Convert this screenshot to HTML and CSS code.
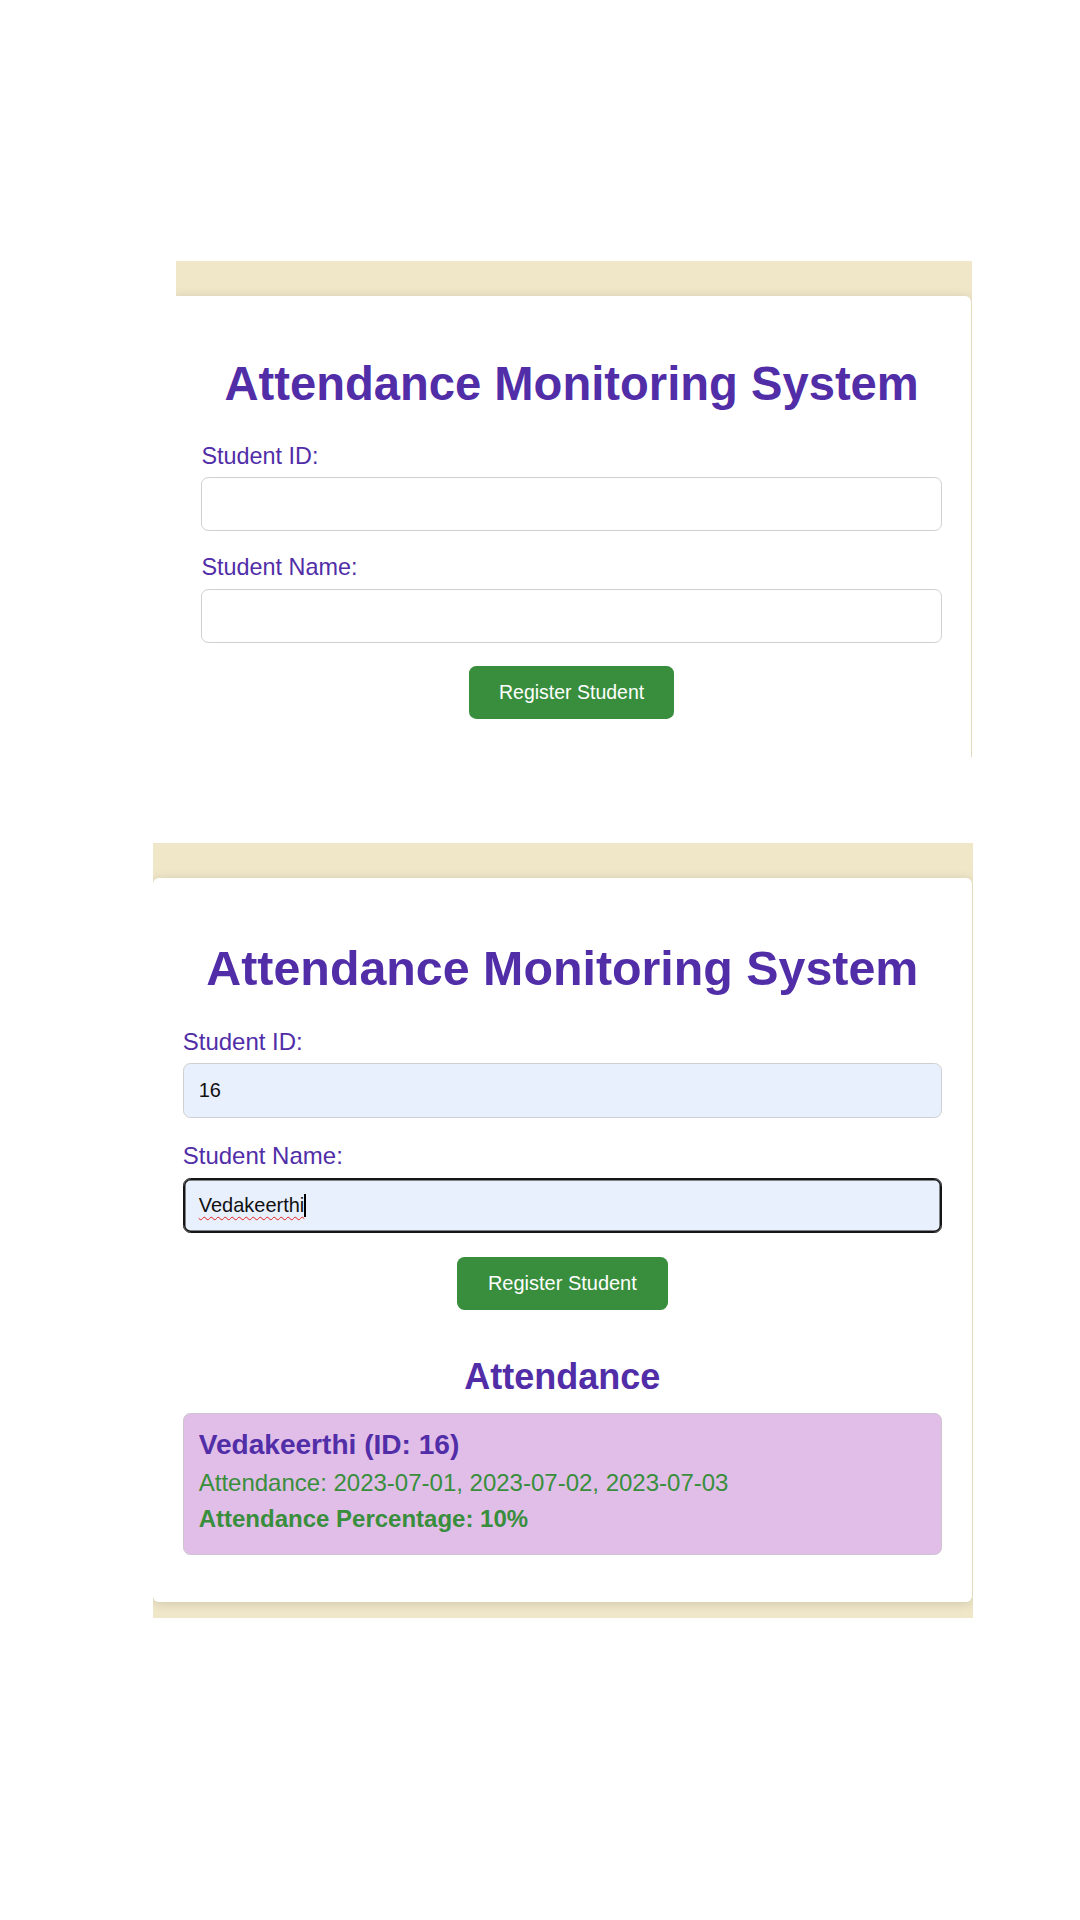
FILE: index.html
```html
<!DOCTYPE html>
<html lang="en">
<head>
<meta charset="utf-8">
<title>Attendance Monitoring System</title>
<link rel="stylesheet" href="styles.css">
</head>
<body>
<main class="page">
  <section class="frame frame--first">
    <div class="card card--open">
      <h1 class="title">Attendance Monitoring System</h1>
      <form class="form">
        <label class="label" for="sid1">Student ID:</label>
        <input class="field" id="sid1" type="text">
        <label class="label" for="sname1">Student Name:</label>
        <input class="field" id="sname1" type="text">
        <button class="btn" type="button">Register Student</button>
      </form>
    </div>
  </section>

  <section class="frame frame--second">
    <div class="card">
      <h1 class="title">Attendance Monitoring System</h1>
      <form class="form">
        <label class="label" for="sid2">Student ID:</label>
        <input class="field field--filled" id="sid2" type="text" value="16">
        <label class="label">Student Name:</label>
        <div class="field field--filled field--focused" role="textbox"><span class="typed">Vedakeerthi</span><span class="caret"></span></div>
        <button class="btn" type="button">Register Student</button>
      </form>
      <section class="attendance">
        <h2 class="attendance__title">Attendance</h2>
        <div class="record">
          <h3 class="record__name">Vedakeerthi (ID: 16)</h3>
          <p class="record__line">Attendance: 2023-07-01, 2023-07-02, 2023-07-03</p>
          <p class="record__line record__line--pct">Attendance Percentage: 10%</p>
        </div>
      </section>
    </div>
  </section>
</main>
</body>
</html>
```

FILE: styles.css
```css
body {
  margin: 0;
  background: #ffffff;
  font-family: "Liberation Sans", Arial, sans-serif;
}

.page {
  display: flex;
  flex-direction: column;
  align-items: flex-start;
  padding-top: 261px;
}

.frame {
  background: #f0e7c9;
  overflow: hidden;
  display: flex;
  justify-content: flex-end;
  align-items: flex-start;
  box-sizing: border-box;
}

.frame--first {
  --u: 1.4625px;
  margin-left: 176px;
  width: 796px;
  height: 496px;
  padding-top: 35px;
  padding-right: 1px;
}

.frame--second {
  --u: 1.5px;
  margin-left: 153px;
  margin-top: 86px;
  width: 820px;
  padding: 35px 1px 16px 0;
}

.card {
  flex-shrink: 0;
  width: calc(var(--u) * 506.2);
  padding: calc(var(--u) * 20);
  background: #ffffff;
  border-radius: calc(var(--u) * 4);
  box-shadow: 0 calc(var(--u) * 1) calc(var(--u) * 7) rgba(0, 0, 0, 0.13);
}

.card--open {
  padding-bottom: calc(var(--u) * 80);
}

.title {
  margin: calc(var(--u) * 21.3) 0;
  font-size: calc(var(--u) * 32.25);
  font-weight: 700;
  line-height: normal;
  color: #512da8;
  text-align: center;
}

.form {
  display: flex;
  flex-direction: column;
  margin: 0;
}

.label {
  font-size: calc(var(--u) * 16);
  line-height: normal;
  color: #512da8;
  margin-bottom: calc(var(--u) * 5);
}

.field {
  box-sizing: border-box;
  width: 100%;
  margin: 0 0 calc(var(--u) * 16);
  padding: calc(var(--u) * 10);
  border: calc(var(--u) * 1) solid #cfcfcf;
  border-radius: calc(var(--u) * 5);
  background: #ffffff;
  color: #111111;
  font-family: "Liberation Sans", Arial, sans-serif;
  font-size: calc(var(--u) * 13.33);
  line-height: normal;
  outline: none;
}

.field--filled {
  background: #e8f0fe;
}

.field--focused {
  border-color: #151515;
  box-shadow: inset 0 0 0 calc(var(--u) * 1) #151515;
  white-space: nowrap;
}

.typed {
  text-decoration: underline wavy #e0201a;
  text-decoration-thickness: 1px;
  text-underline-offset: 4px;
}

.caret {
  display: inline-block;
  width: 2px;
  height: 1.15em;
  vertical-align: top;
  background: #000000;
}

.btn {
  align-self: center;
  padding: calc(var(--u) * 10) calc(var(--u) * 20.5);
  border: none;
  border-radius: calc(var(--u) * 5);
  background: #388e3c;
  color: #ffffff;
  font-family: "Liberation Sans", Arial, sans-serif;
  font-size: calc(var(--u) * 13.33);
  line-height: normal;
}

.attendance {
  margin-bottom: calc(var(--u) * 11.3);
}

.attendance__title {
  margin: calc(var(--u) * 30.6) 0 calc(var(--u) * 10.3);
  font-size: calc(var(--u) * 24);
  font-weight: 700;
  line-height: normal;
  color: #512da8;
  text-align: center;
}

.record {
  padding: calc(var(--u) * 10);
  border: calc(var(--u) * 1) solid #cdc4cf;
  border-radius: calc(var(--u) * 5);
  background: #e1bee7;
}

.record__name {
  margin: 0 0 calc(var(--u) * 5.4);
  font-size: calc(var(--u) * 18.72);
  font-weight: 700;
  line-height: normal;
  color: #512da8;
}

.record__line {
  margin: calc(var(--u) * 3.8) 0;
  font-size: calc(var(--u) * 16);
  line-height: normal;
  color: #388e3c;
}

.record__line--pct {
  margin-top: calc(var(--u) * 5.2);
  font-weight: 700;
}
```
